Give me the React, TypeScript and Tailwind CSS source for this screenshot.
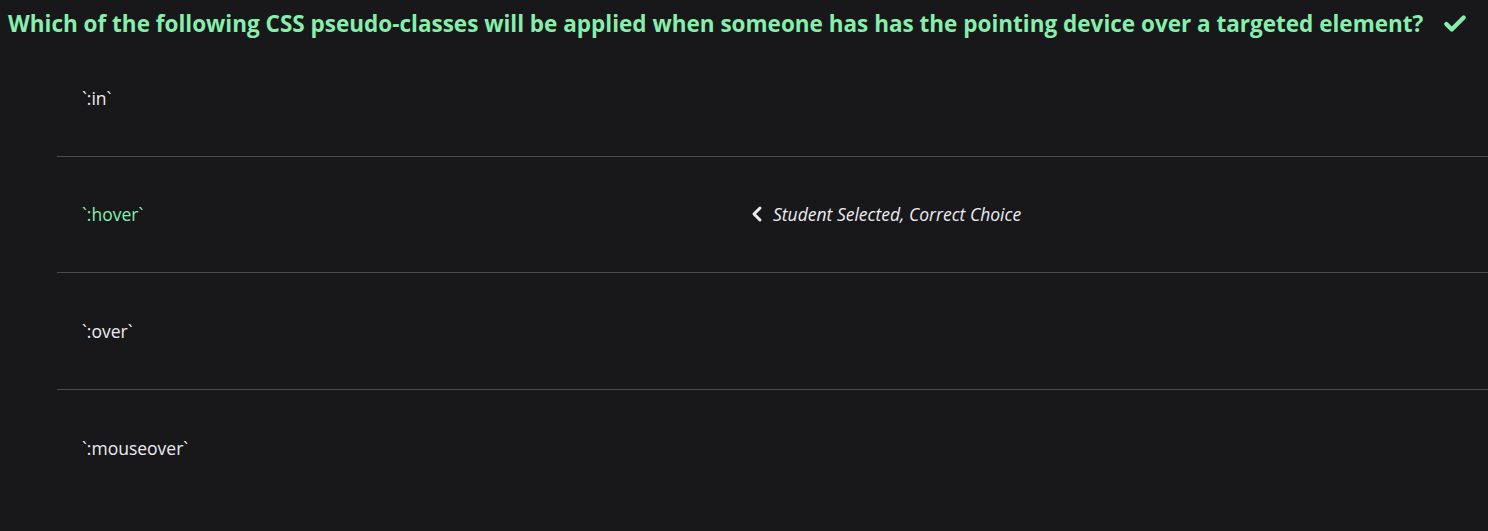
import { Check, ChevronLeft } from "lucide-react";

const choices = [
  { text: "`:in`", correct: false },
  { text: "`:hover`", correct: true },
  { text: "`:over`", correct: false },
  { text: "`:mouseover`", correct: false },
];

function App() {
  return (
    <div className="min-h-[531px] bg-[#18181b] text-[#e4e4e7] font-['Open_Sans',sans-serif]">
      <div className="flex items-center h-[40px] pt-[8px] pl-2">
        <h1 className="text-[22.5px] font-bold text-[#86efac] leading-none whitespace-nowrap">
          Which of the following CSS pseudo-classes will be applied when someone has has the pointing device over a targeted element?
        </h1>
        <Check className="ml-[19px] w-[26px] h-[26px] text-[#86efac]" strokeWidth={4} />
      </div>
      <ul className="ml-[57px]">
        {choices.map((c, i) => (
          <li
            key={i}
            className={
              "flex items-center h-[116.5px] pl-[25px] " +
              (i < choices.length - 1 ? "border-b border-[#4a4a4f]" : "")
            }
          >
            <span className={"w-[663px] text-[17.5px] " + (c.correct ? "text-[#86efac]" : "text-[#ececef]")}>
              {c.text}
            </span>
            {c.correct && (
              <span className="flex items-center gap-[4px] text-[17.5px] italic text-[#ececef]">
                <ChevronLeft className="w-[24px] h-[24px]" strokeWidth={3} />
                Student Selected, Correct Choice
              </span>
            )}
          </li>
        ))}
      </ul>
    </div>
  );
}

export default App;
